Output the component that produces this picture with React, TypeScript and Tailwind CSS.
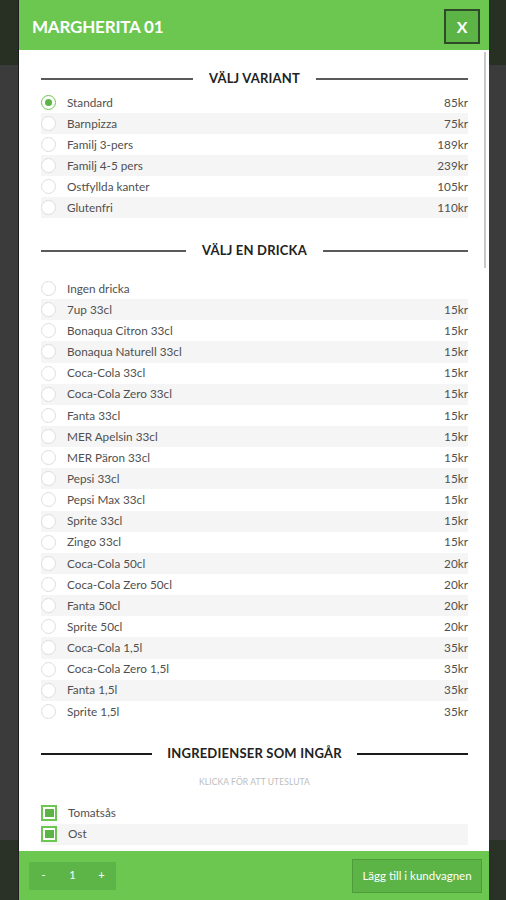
import React from "react";

const variants = [
  { name: "Standard", price: "85kr" },
  { name: "Barnpizza", price: "75kr" },
  { name: "Familj 3-pers", price: "189kr" },
  { name: "Familj 4-5 pers", price: "239kr" },
  { name: "Ostfyllda kanter", price: "105kr" },
  { name: "Glutenfri", price: "110kr" },
];

const drinks = [
  { name: "Ingen dricka", price: "" },
  { name: "7up 33cl", price: "15kr" },
  { name: "Bonaqua Citron 33cl", price: "15kr" },
  { name: "Bonaqua Naturell 33cl", price: "15kr" },
  { name: "Coca-Cola 33cl", price: "15kr" },
  { name: "Coca-Cola Zero 33cl", price: "15kr" },
  { name: "Fanta 33cl", price: "15kr" },
  { name: "MER Apelsin 33cl", price: "15kr" },
  { name: "MER Päron 33cl", price: "15kr" },
  { name: "Pepsi 33cl", price: "15kr" },
  { name: "Pepsi Max 33cl", price: "15kr" },
  { name: "Sprite 33cl", price: "15kr" },
  { name: "Zingo 33cl", price: "15kr" },
  { name: "Coca-Cola 50cl", price: "20kr" },
  { name: "Coca-Cola Zero 50cl", price: "20kr" },
  { name: "Fanta 50cl", price: "20kr" },
  { name: "Sprite 50cl", price: "20kr" },
  { name: "Coca-Cola 1,5l", price: "35kr" },
  { name: "Coca-Cola Zero 1,5l", price: "35kr" },
  { name: "Fanta 1,5l", price: "35kr" },
  { name: "Sprite 1,5l", price: "35kr" },
];

const ingredients = ["Tomatsås", "Ost"];

const SectionTitle = ({ title, dark }: { title: string; dark?: boolean }) => (
  <div className={`flex items-center h-[20px] ${dark ? "gap-[15px]" : "gap-[16px]"}`}>
    <div className={`flex-1 h-[2px] ${dark ? "bg-[#1a1a1a]" : "bg-[#5a5a5a]"}`} />
    <span className="text-[13px] font-bold text-[#222] tracking-[0.2px] whitespace-nowrap">{title}</span>
    <div className={`flex-1 h-[2px] ${dark ? "bg-[#1a1a1a]" : "bg-[#5a5a5a]"}`} />
  </div>
);

const Radio = ({ checked }: { checked?: boolean }) => (
  <span className={`w-[15px] h-[15px] rounded-full border flex items-center justify-center shrink-0 bg-white ${checked ? "border-[#6cc751] border-[1.5px]" : "border-[#dedede]"}`}>
    {checked && <span className="w-[7px] h-[7px] rounded-full bg-[#5cb346]" />}
  </span>
);

const OptionRow = ({ name, price, checked, shaded, tall }: { name: string; price: string; checked?: boolean; shaded: boolean; tall?: boolean }) => (
  <div className={`flex items-center ${tall ? "h-[21.15px]" : "h-[21px]"} ${shaded ? "bg-[#f5f5f5]" : ""}`}>
    <Radio checked={checked} />
    <span className="ml-[11px] flex-1 text-[11.75px] text-[#505050]">{name}</span>
    <span className="text-[11.75px] text-[#505050]">{price}</span>
  </div>
);

export default function App() {
  return (
    <div className="relative w-[506px] h-[900px] overflow-hidden bg-[#3b3b3b]" style={{ fontFamily: "Lato, 'Open Sans', sans-serif" }}>
      {/* dimmed page behind */}
      <div className="flex flex-col h-full">
        <div className="h-[65px] bg-[#283024]" />
        <div className="flex-1" />
        <div className="h-[60px] bg-[#2a3227]" />
      </div>

      {/* modal */}
      <div className="absolute left-[18px] top-0 w-[471px] h-[900px] flex flex-col bg-white border-l border-[#1c1c1c]">
        <div className="h-[50px] bg-[#6cc751] flex items-center justify-between pl-[13px] pr-[9px]">
          <span className="mt-[4px] text-white font-bold text-[17px] tracking-[-0.2px]">MARGHERITA 01</span>
          <button className="w-[36px] h-[35px] mt-[3px] bg-[#5cb346] border-2 border-[#2f4a28] text-white font-bold text-[16px] flex items-center justify-center">X</button>
        </div>

        <div className="relative flex-1 overflow-hidden pl-[22px] pr-[21px]">
          <div className="pt-[19px]">
            <SectionTitle title="VÄLJ VARIANT" />
            <div className="mt-[3px]">
              {variants.map((v, i) => (
                <OptionRow key={v.name} name={v.name} price={v.price} checked={i === 0} shaded={i % 2 === 1} />
              ))}
            </div>

            <div className="mt-[23px]">
              <SectionTitle title="VÄLJ EN DRICKA" />
            </div>
            <div className="mt-[17px]">
              {drinks.map((d, i) => (
                <OptionRow key={d.name} name={d.name} price={d.price} shaded={i % 2 === 1} tall />
              ))}
            </div>

            <div className="mt-[22px]">
              <SectionTitle title="INGREDIENSER SOM INGÅR" dark />
            </div>
            <div className="mt-[12px] text-center text-[8.5px] text-[#bdbdbd] tracking-[0.1px]">KLICKA FÖR ATT UTESLUTA</div>
            <div className="mt-[14px]">
              {ingredients.map((name, i) => (
                <div key={name} className={`flex items-center h-[21px] ${i % 2 === 1 ? "bg-[#f5f5f5]" : ""}`}>
                  <span className="w-[16px] h-[16px] border-2 border-[#6cc751] bg-white flex items-center justify-center shrink-0">
                    <span className="w-[9px] h-[8px] bg-[#5cb346]" />
                  </span>
                  <span className="ml-[11px] text-[11.75px] text-[#505050]">{name}</span>
                </div>
              ))}
            </div>
          </div>

          {/* scrollbar thumb */}
          <div className="absolute right-[3px] top-[2px] w-[2px] h-[216px] bg-[#c9c9c9]" />
        </div>

        <div className="h-[49px] bg-[#6cc751] flex items-center justify-between pl-[10px] pr-[7px]">
          <div className="flex items-center w-[87px] h-[28px] bg-[#5db548] text-white text-[11px]">
            <span className="w-[29px] text-center">-</span>
            <span className="w-[29px] text-center">1</span>
            <span className="w-[29px] text-center">+</span>
          </div>
          <button className="h-[34px] w-[130px] bg-[#5cb346] border border-[#4e9b3b] text-white text-[11.5px]">Lägg till i kundvagnen</button>
        </div>
      </div>
    </div>
  );
}
